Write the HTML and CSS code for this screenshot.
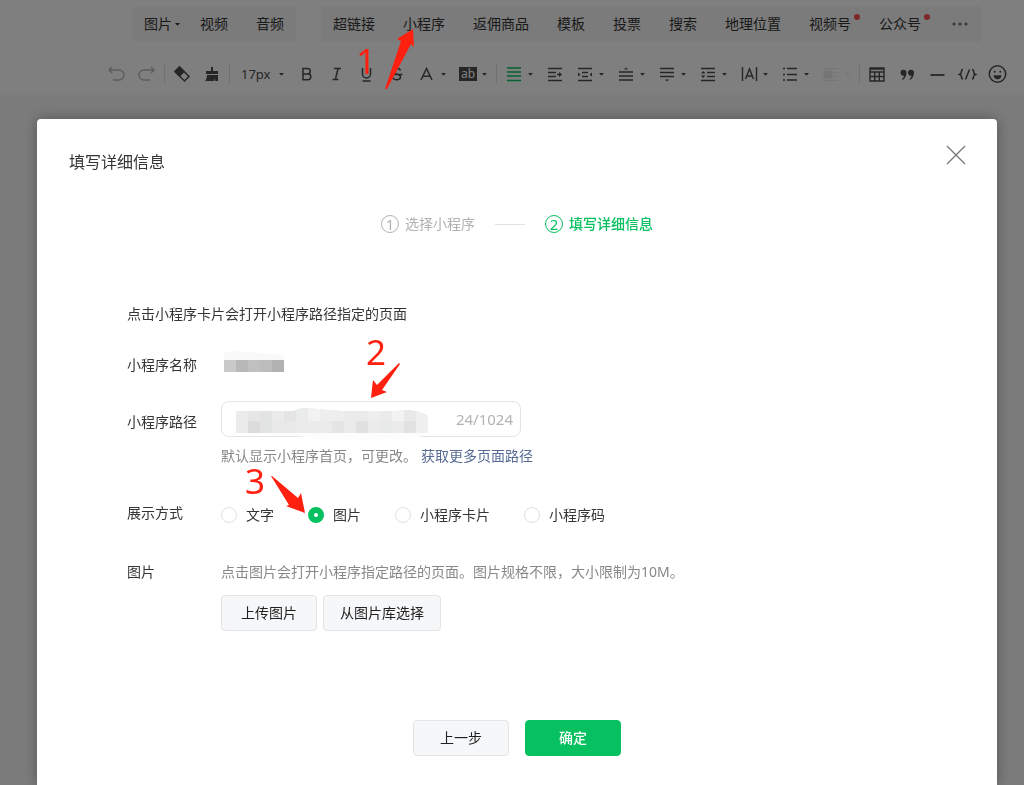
FILE: index.html
```html
<!DOCTYPE html>
<html lang="zh-CN">
<head>
<meta charset="utf-8">
<title>填写详细信息</title>
<link rel="stylesheet" href="styles.css">
</head>
<body>
<svg class="defs" aria-hidden="true">
  <symbol id="caret" viewBox="0 0 11 22"><path d="M3 10h5L5.500 12.800z" fill="currentColor"/></symbol>
</svg>
<header class="editor">
  <nav class="insert">
    <div class="group">
      <button class="item">图片<svg class="item-caret"><use href="#caret"/></svg></button>
      <button class="item">视频</button>
      <button class="item">音频</button>
    </div>
    <div class="group">
      <button class="item">超链接</button>
      <button class="item">小程序</button>
      <button class="item">返佣商品</button>
      <button class="item">模板</button>
      <button class="item">投票</button>
      <button class="item">搜索</button>
      <button class="item">地理位置</button>
      <button class="item">视频号<i class="dot"></i></button>
      <button class="item">公众号<i class="dot"></i></button>
      <button class="item more" aria-label="更多"><svg width="20" height="20" fill="currentColor"><circle cx="5" cy="10" r="1.500"/><circle cx="11" cy="10" r="1.500"/><circle cx="17" cy="10" r="1.500"/></svg></button>
    </div>
  </nav>
  <div class="toolbar">
    <button class="tool muted" aria-label="撤销"><svg class="ico" fill="none" stroke="currentColor" stroke-width="1.500"><path d="M4 7h9a4.500 4.500 0 0 1 0 10H7M6 4 3 7l3 3"/></svg></button>
    <button class="tool muted" aria-label="重做"><svg class="ico" fill="none" stroke="currentColor" stroke-width="1.500"><path d="M17 7H8a4.500 4.500 0 0 0 0 10h6M15 4l3 3-3 3"/></svg></button>
    <i class="sep"></i>
    <button class="tool" aria-label="清除格式"><svg class="ico"><path d="M8.500 3 14 8.500 8.500 14 3 8.500z" fill="currentColor"/><path d="M8.500 4 18 13.500 13.500 18 4 8.500z" fill="none" stroke="currentColor" stroke-width="1.500"/></svg></button>
    <button class="tool" aria-label="格式刷"><svg class="ico" fill="currentColor"><path d="M10 4h2v4h5v3H5V8h5zM6 12h11v6h-3v-3l-1 3H4q2-2 2-6z"/></svg></button>
    <i class="sep"></i>
    <button class="tool size">17px<svg class="caret"><use href="#caret"/></svg></button>
    <button class="tool" aria-label="加粗"><svg class="ico" fill="none" stroke="currentColor" stroke-width="1.500"><path d="M7 5.500h4.500a2.700 2.700 0 0 1 0 5.500H7zM7 11h5a2.800 2.800 0 0 1 0 5.700H7z"/></svg></button>
    <button class="tool" aria-label="斜体"><svg class="ico" fill="none" stroke="currentColor" stroke-width="1.500"><path d="M8 5.500h7M6.500 16.500h6M12 5.500l-2.600 11"/></svg></button>
    <button class="tool" aria-label="下划线"><svg class="ico" fill="none" stroke="currentColor" stroke-width="1.500"><path d="M6.500 5v6a4 4 0 0 0 8 0V5M6.500 18h8"/></svg></button>
    <button class="tool" aria-label="删除线"><svg class="ico" fill="none" stroke="currentColor" stroke-width="1.500"><path d="M14.500 7.500C13.500 4.500 7 4.500 7 8c0 1.500 1 2.400 3.500 3s4 1.300 4 3c0 3.600-7 3.600-8.500 0M4.500 11.500h12"/></svg></button>
    <button class="tool" aria-label="文字颜色"><svg class="ico" fill="none" stroke="currentColor" stroke-width="1.500"><path d="M5 17 10.500 5.500 16 17M7 13.200h7"/></svg><svg class="caret"><use href="#caret"/></svg></button>
    <button class="tool" aria-label="背景色"><span class="ab">ab</span><svg class="caret"><use href="#caret"/></svg></button>
    <i class="sep"></i>
    <button class="tool" aria-label="对齐"><svg class="ico green" stroke="currentColor" stroke-width="1.300"><path d="M4 5h14M4 9h14M4 13h14M4 17.500h14"/></svg><svg class="caret"><use href="#caret"/></svg></button>
    <button class="tool" aria-label="首行缩进"><svg class="ico" stroke="currentColor" stroke-width="1.400"><path d="M4 5.500h14M4 9.500h8M4 13.500h8M4 17.500h14M13 11.500h4"/><path d="M15 9l3 2.500-3 2.500z" fill="currentColor" stroke="none"/></svg></button>
    <button class="tool" aria-label="两端缩进"><svg class="ico" stroke="currentColor" stroke-width="1.400"><path d="M4 5.500h14M8 9.500h6M8 13.500h6M4 17.500h14"/><path d="M4 9.500l2.500 2L4 13.500zM18 9.500l-2.500 2 2.500 2z" fill="currentColor" stroke="none"/></svg><svg class="caret"><use href="#caret"/></svg></button>
    <button class="tool" aria-label="段前距"><svg class="ico" stroke="currentColor" stroke-width="1.400"><path d="M4 9h14M4 13h14M4 17h14"/><path d="M9 6.500 11 4.500l2 2z" fill="currentColor" stroke="none"/></svg><svg class="caret"><use href="#caret"/></svg></button>
    <button class="tool" aria-label="段后距"><svg class="ico" stroke="currentColor" stroke-width="1.400"><path d="M4 5.500h14M4 9.500h14M4 13.500h14"/><path d="M9 16.500l2 2 2-2z" fill="currentColor" stroke="none"/></svg><svg class="caret"><use href="#caret"/></svg></button>
    <button class="tool" aria-label="行间距"><svg class="ico" stroke="currentColor" stroke-width="1.400"><path d="M4 5.500h14M10 9.500h8M10 13.500h8M4 17.500h14"/><path d="M4 10.500 6.200 8l2.300 2.500zM4 12.500 6.200 15l2.300-2.500z" fill="currentColor" stroke="none"/></svg><svg class="caret"><use href="#caret"/></svg></button>
    <button class="tool" aria-label="字间距"><svg class="ico" fill="none" stroke="currentColor" stroke-width="1.400"><path d="M4.500 4v14M18.500 4v14M7.500 16l4-10 4 10M9 13h5"/></svg><svg class="caret"><use href="#caret"/></svg></button>
    <button class="tool" aria-label="列表"><svg class="ico" stroke="currentColor" stroke-width="1.400"><path d="M8 5.500h10M8 11.500h10M8 17h10M4 5.500h2M4 11.500h2M4 17h2"/></svg><svg class="caret"><use href="#caret"/></svg></button>
    <button class="tool disabled" aria-label="图文环绕" disabled><svg class="ico" stroke="currentColor"><path d="M4 5.500h14M13 9.500h5M13 13.500h5M4 17.500h14"/><path d="M4 8h8v7H4z" fill="currentColor"/></svg><svg class="caret"><use href="#caret"/></svg></button>
    <i class="sep"></i>
    <button class="tool" aria-label="表格"><svg class="ico" fill="none" stroke="currentColor" stroke-width="1.400"><path d="M4 5h14v13H4zM4 9h14M4 13.500h14M8.700 9v9M13.300 9v9M4 6h14"/></svg></button>
    <button class="tool" aria-label="引用"><svg class="ico" fill="currentColor"><path d="M10.500 9.500C10.500 13 9 15.500 6.500 17l-.5-1c1.200-1 1.800-2 2-3.300a3 3 0 1 1 2.500-3.200zM18 9.500c0 3.500-1.500 6-4 7.500l-.5-1c1.200-1 1.800-2 2-3.300A3 3 0 1 1 18 9.500z"/></svg></button>
    <button class="tool" aria-label="分隔线"><svg class="ico" stroke="currentColor" stroke-width="1.800"><path d="M4.500 12h14"/></svg></button>
    <button class="tool" aria-label="代码"><svg class="ico" fill="none" stroke="currentColor" stroke-width="1.500"><path d="M7 6.500q-1.500 0-1.500 2T3.500 11.500q2 .5 2 2.500t1.500 2M16 6.500q1.500 0 1.500 2t2 3q-2 .5-2 2.500t-1.500 2M13.500 6.500l-4 10"/></svg></button>
    <button class="tool" aria-label="表情"><svg class="ico" fill="none" stroke="currentColor" stroke-width="1.500"><circle cx="11.500" cy="11" r="8.200"/><path d="M7.500 12.200h8q-.5 4-4 4t-4-4z" fill="currentColor" stroke="none"/><circle cx="8.700" cy="8.700" r="1" fill="currentColor" stroke="none"/><circle cx="14.300" cy="8.700" r="1" fill="currentColor" stroke="none"/></svg></button>
  </div>
</header>

<div class="mask">
  <section class="dialog" role="dialog" aria-labelledby="dialog-title">
    <div class="dialog-head">
      <h1 class="title" id="dialog-title">填写详细信息</h1>
      <button class="close" aria-label="关闭"><svg width="24" height="24" stroke="currentColor" stroke-width="1.300"><path d="M3 3l18 18M21 3 3 21"/></svg></button>
    </div>
    <ol class="steps">
      <li class="step"><span class="num">1</span>选择小程序</li>
      <li class="step active"><span class="num">2</span>填写详细信息</li>
    </ol>
    <form class="form">
      <p class="intro">点击小程序卡片会打开小程序路径指定的页面</p>
      <div class="row name-row">
        <span class="label">小程序名称</span>
        <svg class="name-mosaic" width="64" height="24">
          <path d="M3 0 15 -2l48 4v5H3z" fill="#f9f9f9"/>
          <path d="M3 7h12v12H3z" fill="#c9c9c9"/><path d="M15 7h12v12H15z" fill="#b8b8b8"/><path d="M27 7h12v12H27z" fill="#c0c0c0"/><path d="M39 7h12v12H39z" fill="#bcbcbc"/><path d="M51 7h12v12H51z" fill="#b1b1b1"/>
        </svg>
      </div>
      <div class="row path-row">
        <label class="label" for="path">小程序路径</label>
        <div>
          <div class="field">
            <input class="input" id="path" type="text">
            <span class="count">24/1024</span>
            <svg class="path-mosaic" width="214" height="44">
              <clipPath id="smear"><path d="M16 13h58q4-3 12-3l36 3 52 0 12-1q12 0 22 6v17H16z"/></clipPath>
              <path d="M8 34h196l2 3q-10 3-28 4-50 2-90-1-8-3-30-3H10z" fill="#fdfdfd"/>
              <g clip-path="url(#smear)" shape-rendering="crispEdges">
                <path d="M16 8h192v28H16z" fill="#ebebeb"/>
                <path d="M28 8h12v15H28z" fill="#e6e6e6"/><path d="M40 8h12v15H40z" fill="#e2e4e3"/><path d="M64 8h12v15H64z" fill="#e4e4e4"/><path d="M76 8h12v15H76z" fill="#eaebeb"/><path d="M88 8h12v15H88z" fill="#f2f2f2"/><path d="M100 8h24v15h-24z" fill="#eee"/><path d="M148 8h12v15h-12z" fill="#eee"/><path d="M172 8h12v15h-12z" fill="#f3f3f3"/><path d="M184 8h12v15h-12z" fill="#e6e9e8"/><path d="M196 8h12v15h-12z" fill="#efefef"/>
                <path d="M28 23h12v13H28z" fill="#dcdcdc"/><path d="M40 23h12v13H40z" fill="#e2e4e3"/><path d="M52 23h24v13H52z" fill="#e8e8e8"/><path d="M112 23h12v13h-12z" fill="#e5e5e5"/><path d="M136 23h12v13h-12z" fill="#e1e1e1"/><path d="M160 23h12v13h-12z" fill="#e7eae9"/><path d="M184 23h12v13h-12z" fill="#e2e2e2"/><path d="M196 23h12v13h-12z" fill="#f0f0f0"/>
              </g>
            </svg>
          </div>
          <p class="hint">默认显示小程序首页，可更改。<a class="link" href="#paths">获取更多页面路径</a></p>
        </div>
      </div>
      <div class="row mode-row" role="radiogroup" aria-labelledby="mode">
        <span class="label" id="mode">展示方式</span>
        <div class="radios">
          <label class="option"><input class="radio" type="radio" name="mode">文字</label>
          <label class="option"><input class="radio" type="radio" name="mode" checked>图片</label>
          <label class="option"><input class="radio" type="radio" name="mode">小程序卡片</label>
          <label class="option"><input class="radio" type="radio" name="mode">小程序码</label>
        </div>
      </div>
      <div class="row image-row">
        <span class="label">图片</span>
        <div>
          <p class="tip">点击图片会打开小程序指定路径的页面。图片规格不限，大小限制为10M。</p>
          <div class="uploads">
            <button class="btn" type="button">上传图片</button>
            <button class="btn" type="button">从图片库选择</button>
          </div>
        </div>
      </div>
    </form>
    <div class="footer">
      <button class="btn">上一步</button>
      <button class="btn primary">确定</button>
    </div>
  </section>
  <div class="mark mark-one"><span class="digit">1</span><svg class="arrow" width="32" height="64"><path d="M28 2 29 20 26 17 2 62 0 62 16 14 12 12z"/></svg></div>
  <div class="mark mark-two"><span class="digit">2</span><svg class="arrow" width="32" height="38"><path d="M1 36 3 18 7 23 29 1 30 2 12 28 17 30z"/></svg></div>
  <div class="mark mark-three"><span class="digit">3</span><svg class="arrow" width="38" height="40"><path d="M35 38 31 18 28 23 2 1 1 1 19 30 16 31z"/></svg></div>
</div>
</body>
</html>
```
FILE: styles.css
```css
* { box-sizing: border-box; }

body {
  margin: 0;
  min-height: 100vh;
  background: #f6f6f6;
  color: #353535;
  font: 14px/24px "Noto Sans", "Noto Sans CJK SC", sans-serif;
}

button, input { font: inherit; color: inherit; }
h1, p, ol { margin: 0; padding: 0; font-weight: 400; }

.defs { position: absolute; width: 0; height: 0; }

/* Editor bars behind the dialog */
.editor { background: #fff; }

.insert {
  display: flex;
  gap: 25px;
  padding: 6px 0 9px 132px;
  border-bottom: 1px solid #f8f8f8;
}

.group {
  display: flex;
  gap: 28px;
  height: 36px;
  padding: 0 12px;
  border-radius: 4px;
  background: #f6f6f6;
}

.item, .tool {
  display: flex;
  align-items: center;
  flex: none;
  padding: 0;
  border: 0;
  background: none;
}

.item { position: relative; color: #353535; }
.item-caret { width: 11px; height: 22px; margin-right: -11px; }
.more { color: #666; }

.dot {
  position: absolute;
  top: 8px;
  right: -9px;
  width: 6px;
  height: 6px;
  border-radius: 50%;
  background: #fa5151;
}

.toolbar {
  display: flex;
  align-items: center;
  height: 44px;
  padding-left: 102px;
  border-bottom: 1px solid #f8f8f8;
}

.tool { padding: 0 4px; color: #4c4c4c; }
.size { padding: 0 5px 0 9px; justify-content: space-between; width: 60px; font-size: 13px; }
.ico { width: 22px; height: 22px; }
.caret { width: 11px; height: 22px; }
.muted { color: #bbb; }
.disabled { color: #ebebeb; }
.green { color: #07c160; }
.sep { flex: none; width: 1px; height: 20px; margin: 0 2px; background: #e2e2e2; }

.ab {
  width: 18px;
  height: 14px;
  margin: 0 2px;
  background: #4c4c4c;
  color: #fff;
  font-size: 12px;
  line-height: 14px;
  text-align: center;
}

/* Dialog */
.mask {
  position: fixed;
  inset: 0;
  display: flex;
  padding: 119px 27px 0 37px;
  overflow: auto;
  background: rgba(0, 0, 0, 0.5);
}

.dialog {
  flex: 1;
  border-radius: 4px 4px 0 0;
  background: #fff;
  box-shadow: 0 0 14px rgba(0, 0, 0, 0.3);
}

.dialog-head {
  display: flex;
  justify-content: space-between;
  align-items: flex-start;
  padding: 24px 29px 0 32px;
}

.title { font-size: 16px; line-height: 38px; }
.close { display: flex; padding: 0; border: 0; background: none; color: #777; }

.steps {
  display: flex;
  justify-content: center;
  margin-top: 31px;
  list-style: none;
}

.step { display: flex; align-items: center; gap: 6px; color: #b2b2b2; }
.step + .step::before { content: ""; width: 30px; height: 1px; margin: 0 14px 0 20px; background: #e1e1e1; }
.active { color: #07c160; font-weight: 500; }

.num {
  width: 18px;
  height: 18px;
  border: 1px solid currentColor;
  border-radius: 50%;
  font-size: 15px;
  line-height: 16px;
  text-align: center;
  font-weight: 400;
}

.form { padding: 66px 90px 0; }
.row { display: flex; }
.label { flex: none; width: 94px; }

.name-row { margin-top: 27px; }
.name-mosaic { overflow: visible; }
.path-row { margin-top: 24px; }
.path-row > .label { padding-top: 9px; }
.mode-row { margin-top: 33px; }
.image-row { margin-top: 33px; }

.field {
  position: relative;
  display: flex;
  align-items: center;
  width: 300px;
  height: 36px;
  padding: 0 7px 0 14px;
  border: 1px solid #e4e4e4;
  border-radius: 8px;
}

.input { flex: 1; min-width: 0; padding: 0; border: 0; outline: 0; background: none; }
.count { color: #b2b2b2; font-size: 15px; }
.path-mosaic { position: absolute; top: -4px; left: -2px; }

.hint, .tip { color: #888; }
.hint { margin-top: 7px; }
.link { margin-left: 4px; color: #576b95; text-decoration: none; }

.radios { display: flex; gap: 34px; padding-top: 2px; }
.option { display: flex; align-items: center; gap: 9px; }

.radio {
  appearance: none;
  width: 16px;
  height: 16px;
  margin: 0;
  border: 1px solid #e1e1e1;
  border-radius: 50%;
  background: #fff;
}

.radio:checked { border: 6px solid #07c160; }

.uploads { display: flex; gap: 6px; margin-top: 11px; }

.btn {
  min-width: 96px;
  height: 36px;
  padding: 0 16px;
  border: 1px solid #e4e4e4;
  border-radius: 4px;
  background: #f6f7f9;
  color: #222;
}

.primary { border-color: #07c160; background: #07c160; color: #fff; font-weight: 500; }

.footer { display: flex; justify-content: center; gap: 16px; padding: 89px 0 29px; }

/* Numbered arrows drawn over the page */
.mark {
  position: absolute;
  display: flex;
  color: #ff2010;
  fill: #ff2010;
  font-size: 35px;
  line-height: 28px;
  pointer-events: none;
}

.arrow { flex: none; overflow: visible; }
.mark-one { top: 27px; left: 356px; }
.mark-one .digit { padding-top: 20px; margin-right: 9px; }
.mark-two { top: 338px; left: 366px; }
.mark-two .digit { margin-right: -16px; }
.mark-two .arrow { margin-top: 24px; }
.mark-three { top: 467px; left: 245px; }
.mark-three .digit { margin-right: 5px; }
.mark-three .arrow { margin-top: 8px; }
```
